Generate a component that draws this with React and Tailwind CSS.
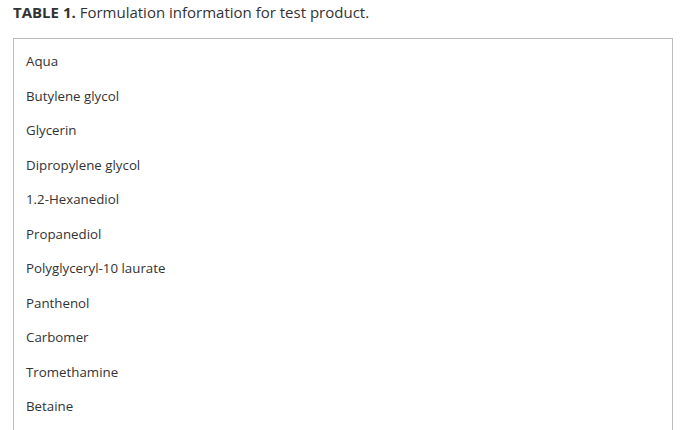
const items = [
  "Aqua",
  "Butylene glycol",
  "Glycerin",
  "Dipropylene glycol",
  "1.2-Hexanediol",
  "Propanediol",
  "Polyglyceryl-10 laurate",
  "Panthenol",
  "Carbomer",
  "Tromethamine",
  "Betaine",
];

export default function App() {
  return (
    <div className="bg-white px-[13px] pt-[1px] text-[#333] font-['Open_Sans',sans-serif]">
      <p className="text-[15px] leading-[22px]">
        <span className="font-bold">TABLE 1.</span> Formulation information for test product.
      </p>
      <div className="mt-[15px] w-[660px] border border-[#bdbdbd] pt-[6px] pb-[20px] pl-[12px]">
        {items.map((it) => (
          <div key={it} className="h-[34.5px] flex items-center text-[13.3px] text-[#333]">
            {it}
          </div>
        ))}
      </div>
    </div>
  );
}
